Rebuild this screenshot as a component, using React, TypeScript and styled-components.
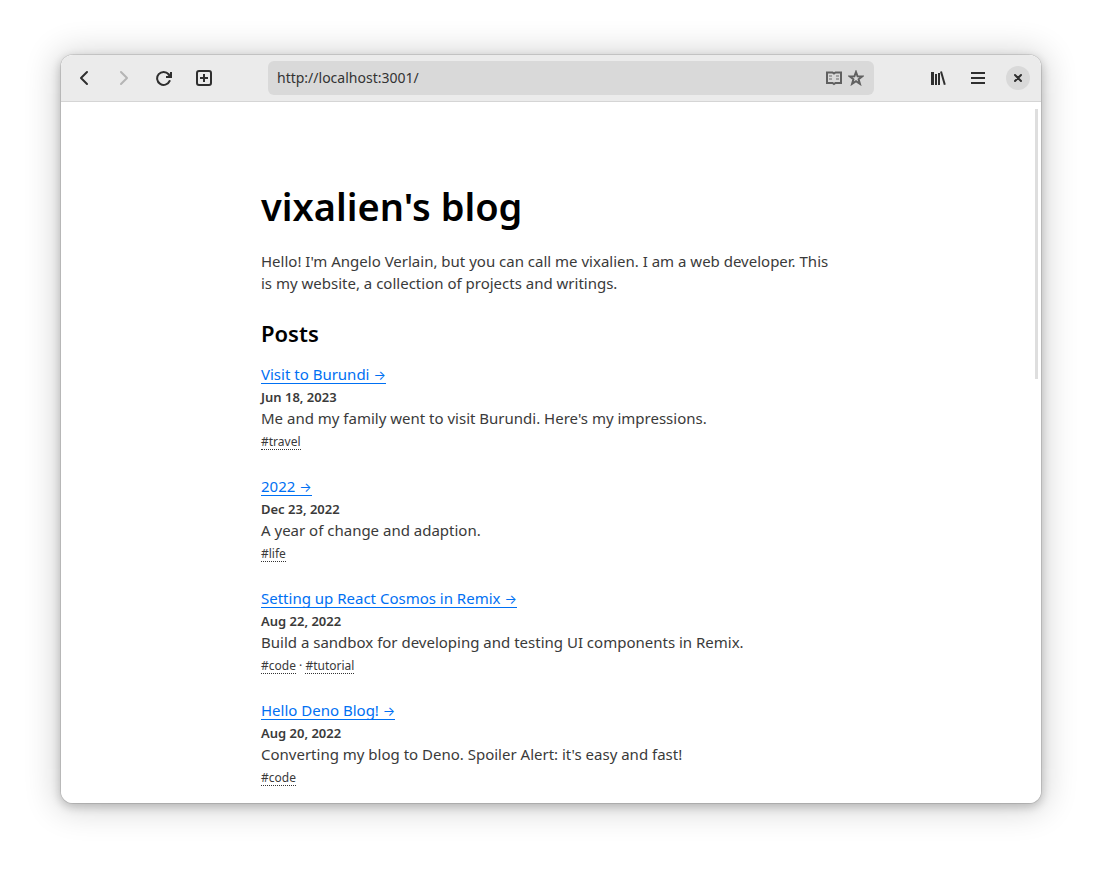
import React from "react";
import styled, { createGlobalStyle } from "styled-components";

const GlobalStyle = createGlobalStyle`
  * { box-sizing: border-box; }
  body {
    margin: 0;
    background: #fff;
    color: #3a3a3a;
    font-family: "Noto Sans", sans-serif;
    font-size: 15px;
    line-height: 22px;
  }
`;

const Desktop = styled.div`
  display: flex;
  min-height: 100vh;
  padding: 55px 61px 67px;
`;

const Window = styled.div`
  position: relative;
  display: flex;
  flex: 1;
  flex-direction: column;
  min-width: 0;
  overflow: hidden;
  border-radius: 12px;
  background: #fff;
`;

const Frame = styled.div`
  display: flex;
  flex: 1;
  min-width: 0;
  border-radius: 12px;
  box-shadow: 0 0 0 1px rgba(0, 0, 0, 0.1), 0 3px 10px 1px rgba(0, 0, 0, 0.2),
    0 2px 32px 6px rgba(0, 0, 0, 0.16);
`;

const HeaderBar = styled.header`
  display: flex;
  align-items: center;
  gap: 47px;
  padding: 6px;
  border-bottom: 1px solid #d5d5d5;
  background: #ebebeb;
`;

const ButtonGroup = styled.div`
  display: flex;
  gap: 6px;
`;

const IconButton = styled.button`
  display: flex;
  align-items: center;
  justify-content: center;
  width: 34px;
  height: 34px;
  padding: 0;
  border: 0;
  border-radius: 6px;
  background: none;
  color: #2f2f2f;

  &:disabled {
    color: #b5b5b5;
  }
`;

const CloseDisc = styled.span`
  display: flex;
  align-items: center;
  justify-content: center;
  width: 24px;
  height: 24px;
  border-radius: 50%;
  background: #d9d9d9;
`;

const AddressBar = styled.div`
  display: flex;
  flex: 1;
  align-items: center;
  min-width: 0;
  height: 34px;
  padding: 0 10px 0 9px;
  border-radius: 6px;
  background: #d9d9d9;
  gap: 6px;
`;

const AddressInput = styled.input`
  flex: 1;
  min-width: 0;
  padding: 0;
  border: 0;
  outline: 0;
  background: none;
  color: #333;
  font: 14px/20px "Noto Sans", sans-serif;
`;

const FieldButton = styled.button`
  display: flex;
  padding: 0;
  border: 0;
  background: none;
  color: #606060;
`;

const Page = styled.main`
  width: 100%;
  max-width: 580px;
  margin: 0 auto;
  padding: 80px 0 16px;
`;

const Title = styled.h1`
  margin: 0 0 20px;
  color: #000;
  font-size: 38px;
  font-weight: 600;
  line-height: 48px;
`;

const Intro = styled.p`
  margin: 0 0 24px;
`;

const SectionTitle = styled.h2`
  margin: 0 0 15px;
  color: #000;
  font-size: 22px;
  font-weight: 600;
  line-height: 30px;
`;

const PostList = styled.div`
  display: flex;
  flex-direction: column;
  gap: 24px;
`;

const Line = styled.div`
  height: 22px;
`;

const PostLink = styled.a`
  display: inline-block;
  border-bottom: 1px solid #0070f3;
  color: #0070f3;
  line-height: 18px;
  text-decoration: none;
`;

const Arrow = styled.span`
  font-family: Inter, sans-serif;
  font-size: 13px;
  line-height: 12px;
`;

const PostDate = styled.time`
  font-size: 13px;
  font-weight: 600;
`;

const Tags = styled(Line)`
  font-size: 12px;
  line-height: 26px;
`;

const TagLink = styled.a`
  display: inline-block;
  border-bottom: 1px dotted #333;
  color: #3a3a3a;
  line-height: 15px;
  text-decoration: none;
`;

const ScrollThumb = styled.div`
  position: absolute;
  top: 54px;
  right: 3px;
  width: 3px;
  height: 270px;
  background: #dedede;
`;

interface Post {
  title: string;
  date: string;
  summary: string;
  tags: string[];
}

const posts: Post[] = [
  { title: "Visit to Burundi", date: "Jun 18, 2023", summary: "Me and my family went to visit Burundi. Here's my impressions.", tags: ["travel"] },
  { title: "2022", date: "Dec 23, 2022", summary: "A year of change and adaption.", tags: ["life"] },
  { title: "Setting up React Cosmos in Remix", date: "Aug 22, 2022", summary: "Build a sandbox for developing and testing UI components in Remix.", tags: ["code", "tutorial"] },
  { title: "Hello Deno Blog!", date: "Aug 20, 2022", summary: "Converting my blog to Deno. Spoiler Alert: it's easy and fast!", tags: ["code"] },
];

const Icon = ({ children }: { children: React.ReactNode }) => (
  <svg width="16" height="16" viewBox="0 0 16 16" fill="none" stroke="currentColor" strokeWidth="2" aria-hidden="true">
    {children}
  </svg>
);

export default function App() {
  return (
    <>
      <GlobalStyle />
      <Desktop>
        <Frame>
          <Window>
            <HeaderBar>
              <ButtonGroup>
                <IconButton aria-label="Back">
                  <Icon><path d="M11 2 5 8l6 6" strokeLinecap="round" strokeLinejoin="round" /></Icon>
                </IconButton>
                <IconButton aria-label="Forward" disabled>
                  <Icon><path d="m5 2 6 6-6 6" strokeLinecap="round" strokeLinejoin="round" /></Icon>
                </IconButton>
                <IconButton aria-label="Reload">
                  <Icon>
                    <path d="M12.600 4.200A6.500 6.500 0 1 0 13.600 11" strokeLinecap="round" />
                    <path d="M15 2v5h-5" />
                    <path d="m12 4 2 2" />
                  </Icon>
                </IconButton>
                <IconButton aria-label="New tab">
                  <Icon>
                    <rect x="1" y="1" width="14" height="14" rx="2" />
                    <path d="M8 4v8M4 8h8" />
                  </Icon>
                </IconButton>
              </ButtonGroup>
              <AddressBar>
                <AddressInput aria-label="Address" defaultValue="http://localhost:3001/" />
                <FieldButton aria-label="Reader mode">
                  <Icon>
                    <path d="M1 2.500h5.500L8 3.500l1.500-1H15v10.500H9.500L8 14l-1.500-1H1z" />
                    <path d="M3 6h3M3 9h3M10 6h3M10 9h3" opacity=".45" />
                  </Icon>
                </FieldButton>
                <FieldButton aria-label="Bookmark">
                  <Icon><path d="m8 2 1.600 4.300 4.600.1-3.600 2.900 1.300 4.500L8 11.200l-3.900 2.600 1.300-4.500L1.800 6.400l4.600-.1z" /></Icon>
                </FieldButton>
              </AddressBar>
              <ButtonGroup>
                <IconButton aria-label="Library">
                  <Icon>
                    <path d="M2.500 2v13" strokeWidth="3" />
                    <path d="M6 4v11M9 3v12" />
                    <path d="m11 1.500 3.800 13.300" />
                  </Icon>
                </IconButton>
                <IconButton aria-label="Menu">
                  <Icon><path d="M1 3h14M1 8h14M1 13h14" /></Icon>
                </IconButton>
                <IconButton aria-label="Close">
                  <CloseDisc>
                    <Icon><path d="m5 5 6 6M11 5l-6 6" strokeLinecap="round" /></Icon>
                  </CloseDisc>
                </IconButton>
              </ButtonGroup>
            </HeaderBar>
            <Page>
              <Title>vixalien's blog</Title>
              <Intro>
                Hello! I'm Angelo Verlain, but you can call me vixalien. I am a web developer. This is my website, a
                collection of projects and writings.
              </Intro>
              <SectionTitle>Posts</SectionTitle>
              <PostList>
                {posts.map((post) => (
                  <article key={post.title}>
                    <Line><PostLink href="#">{post.title} <Arrow>→</Arrow></PostLink></Line>
                    <Line><PostDate>{post.date}</PostDate></Line>
                    <Line>{post.summary}</Line>
                    <Tags>
                      {post.tags.map((tag, i) => (
                        <React.Fragment key={tag}>
                          {i > 0 && " · "}
                          <TagLink href="#">#{tag}</TagLink>
                        </React.Fragment>
                      ))}
                    </Tags>
                  </article>
                ))}
              </PostList>
            </Page>
            <ScrollThumb />
          </Window>
        </Frame>
      </Desktop>
    </>
  );
}
